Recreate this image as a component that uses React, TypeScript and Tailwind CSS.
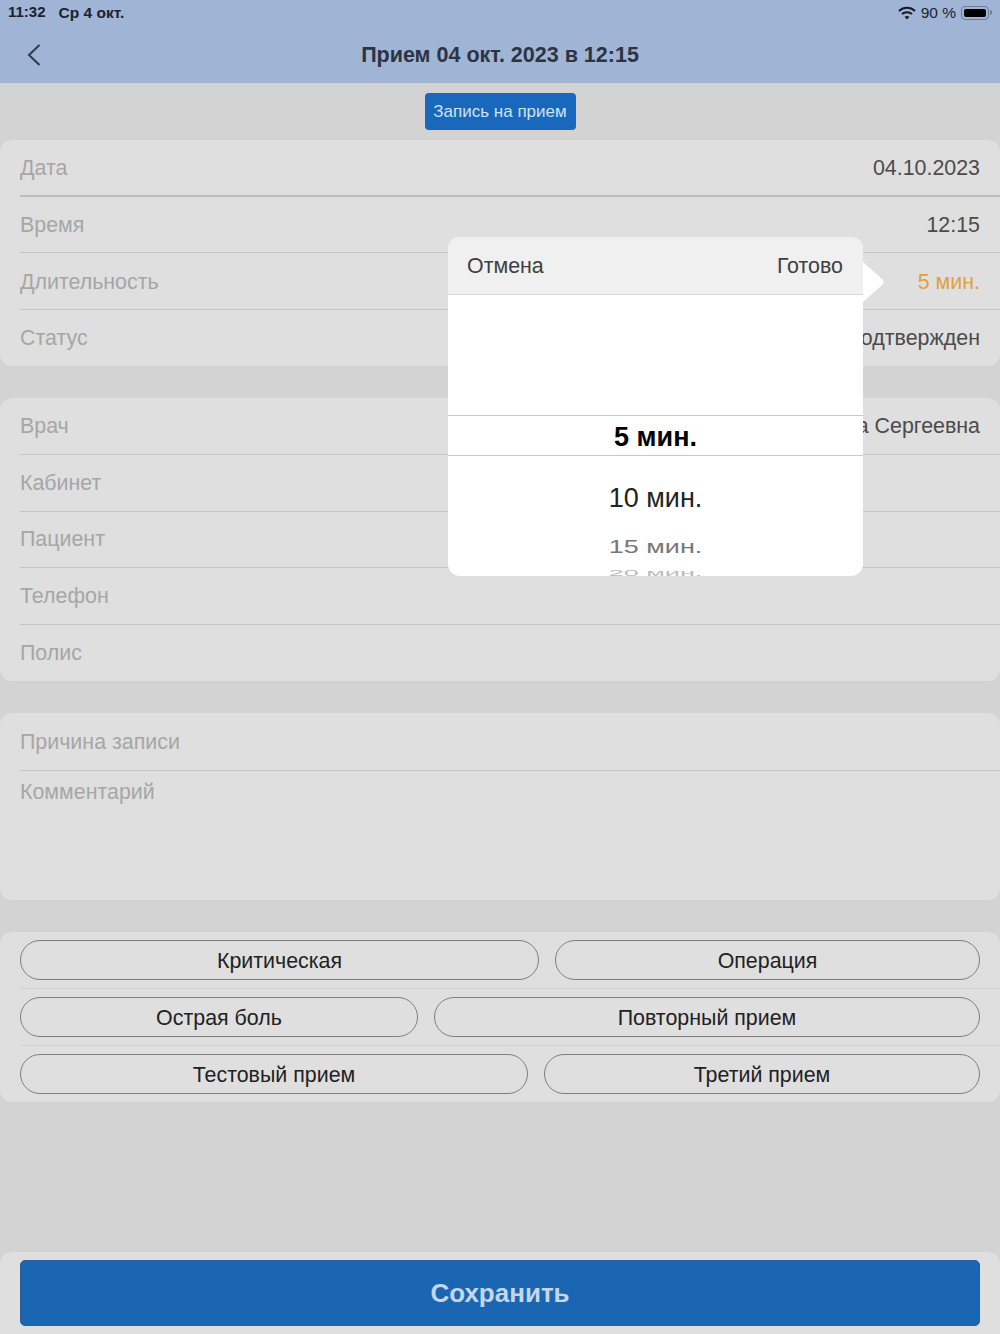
const font = { fontFamily: '"Liberation Sans", Arial, sans-serif' };

function Row({
  label,
  value,
  valueClass = "text-[#4b4b4b]",
  last = false,
  strong = false,
  low = false,
}: {
  label: string;
  value?: string;
  valueClass?: string;
  last?: boolean;
  strong?: boolean;
  low?: boolean;
}) {
  return (
    <div className="pl-5">
      <div
        className={`flex h-[56.6px] items-center justify-between pr-5 text-[21.4px] ${low ? "pt-[2px]" : ""} ${
          last ? "" : strong ? "border-b-2 border-[#bdbdbd]" : "border-b border-[#c6c6c6]"
        }`}
      >
        <span className="text-[#a6a6a6]">{label}</span>
        {value && <span className={valueClass}>{value}</span>}
      </div>
    </div>
  );
}

function Pill({ label, width }: { label: string; width?: string }) {
  return (
    <button
      className={`flex h-[40px] items-center justify-center rounded-full border border-[#7f7f7f] pt-[2px] text-[21.4px] text-[#222] ${
        width ?? "flex-1"
      }`}
    >
      {label}
    </button>
  );
}

function PillRow({ children, last = false }: { children: React.ReactNode; last?: boolean }) {
  return (
    <div className="pl-5">
      <div
        className={`flex h-[56.6px] items-center gap-4 pr-5 ${last ? "" : "border-b border-[#d0d0d0]"}`}
      >
        {children}
      </div>
    </div>
  );
}

function Picker() {
  return (
    <div className="absolute left-[448px] top-[237px] h-[339px] w-[415px]">
      <svg className="absolute left-[414px] top-[24px]" width="24" height="42" viewBox="0 0 24 42">
        <path d="M0 0 L20 18 Q23 21 20 24 L0 42 Z" fill="#fff" />
      </svg>
      <div className="relative h-full overflow-hidden rounded-xl bg-white">
        <div className="flex h-[58px] items-center justify-between border-b border-[#d8d8d8] bg-[#f0f0f0] pl-[19px] pr-5 pt-[2px] text-[21.4px] text-[#3f3f3f]">
          <span>Отмена</span>
          <span>Готово</span>
        </div>
        <div className="mt-[120px] flex h-[41px] items-center justify-center border-y border-[#c9c9c9] pt-[3px] text-[27px] font-bold text-black">
          5 мин.
        </div>
        <div className="mt-[22px] flex h-[40px] items-center justify-center text-[27px] text-[#222]">
          10 мин.
        </div>
        <div className="mt-[19px] flex h-[20px] scale-y-[0.68] items-center justify-center text-[27px] text-[#777]">
          15 мин.
        </div>
        <div className="mt-[10px] flex h-[12px] scale-y-[0.35] items-center justify-center text-[27px] text-[#bbb]">
          20 мин.
        </div>
      </div>
    </div>
  );
}

export default function App() {
  return (
    <div style={font} className="relative flex h-[1334px] w-[1000px] flex-col overflow-hidden bg-[#d3d3d3]">
      <header className="h-[83px] bg-[#a0b4d5]">
        <div className="flex h-[25px] items-center justify-between pl-2 pr-2 text-[15.5px] text-[#1b2230]">
          <div className="flex gap-[13px] font-semibold">
            <span className="text-[15px]">11:32</span>
            <span>Ср 4 окт.</span>
          </div>
          <div className="flex items-center gap-[5px]">
            <svg width="18" height="14" viewBox="0 0 18 14" fill="none" stroke="#151b26" strokeWidth="2">
              <path d="M1 5 C5.5 0.8 12.5 0.8 17 5" />
              <path d="M4 8 C6.7 5.6 11.3 5.6 14 8" />
              <path d="M9 13.5 L6.6 10.8 C8 9.8 10 9.8 11.4 10.8 Z" fill="#151b26" stroke="none" />
            </svg>
            <span>90 %</span>
            <div className="flex items-center">
              <div className="flex h-[14px] w-[28px] items-center rounded-[4px] border border-[#6d7c95] p-[2px]">
                <div className="h-full w-[22px] rounded-[2px] bg-black" />
              </div>
              <div className="ml-px h-[5px] w-[2px] rounded-r bg-[#6d7c95]" />
            </div>
          </div>
        </div>
        <div className="relative flex h-[58px] items-center justify-center pt-[2px]">
          <svg className="absolute left-[27px] top-[19px]" width="14" height="22" viewBox="0 0 14 22" fill="none" stroke="#2f3a4c" strokeWidth="2">
            <path d="M12.5 1 L2 11 L12.5 21" />
          </svg>
          <h1 className="text-[21.5px] font-bold text-[#2b3443]">Прием 04 окт. 2023 в 12:15</h1>
        </div>
      </header>

      <main className="flex flex-1 flex-col">
        <div className="flex h-[57px] items-center justify-center">
          <button className="h-[37px] w-[151px] rounded-[4px] bg-[#1a68bb] text-[17px] text-[#cfe2f7]">
            Запись на прием
          </button>
        </div>

        <section className="rounded-xl bg-[#dfdfdf]">
          <Row label="Дата" value="04.10.2023" strong low />
          <Row label="Время" value="12:15" low />
          <Row label="Длительность" value="5 мин." valueClass="text-[#e2a13c]" low />
          <Row label="Статус" value="Подтвержден" last />
        </section>

        <section className="mt-8 rounded-xl bg-[#dfdfdf]">
          <Row label="Врач" value="Анна Сергеевна" />
          <Row label="Кабинет" />
          <Row label="Пациент" />
          <Row label="Телефон" />
          <Row label="Полис" last />
        </section>

        <section className="mt-8 h-[187px] rounded-xl bg-[#dfdfdf] pt-px">
          <Row label="Причина записи" />
          <div className="pl-5 pt-[5px] text-[21.4px] text-[#a6a6a6]">Комментарий</div>
        </section>

        <section className="mt-8 rounded-xl bg-[#dfdfdf]">
          <PillRow>
            <Pill label="Критическая" width="w-[519px]" />
            <Pill label="Операция" />
          </PillRow>
          <PillRow>
            <Pill label="Острая боль" width="w-[398px]" />
            <Pill label="Повторный прием" />
          </PillRow>
          <PillRow last>
            <Pill label="Тестовый прием" width="w-[508px]" />
            <Pill label="Третий прием" />
          </PillRow>
        </section>

        <footer className="mt-auto h-[82px] rounded-t-xl bg-[#dfdfdf] px-5 pt-2">
          <button className="h-[66px] w-full rounded-[5px] border border-[#2a5f97] bg-[#1a66b3] text-[26px] font-bold text-[#c3d6ea]">
            Сохранить
          </button>
        </footer>
      </main>

      <Picker />
    </div>
  );
}
